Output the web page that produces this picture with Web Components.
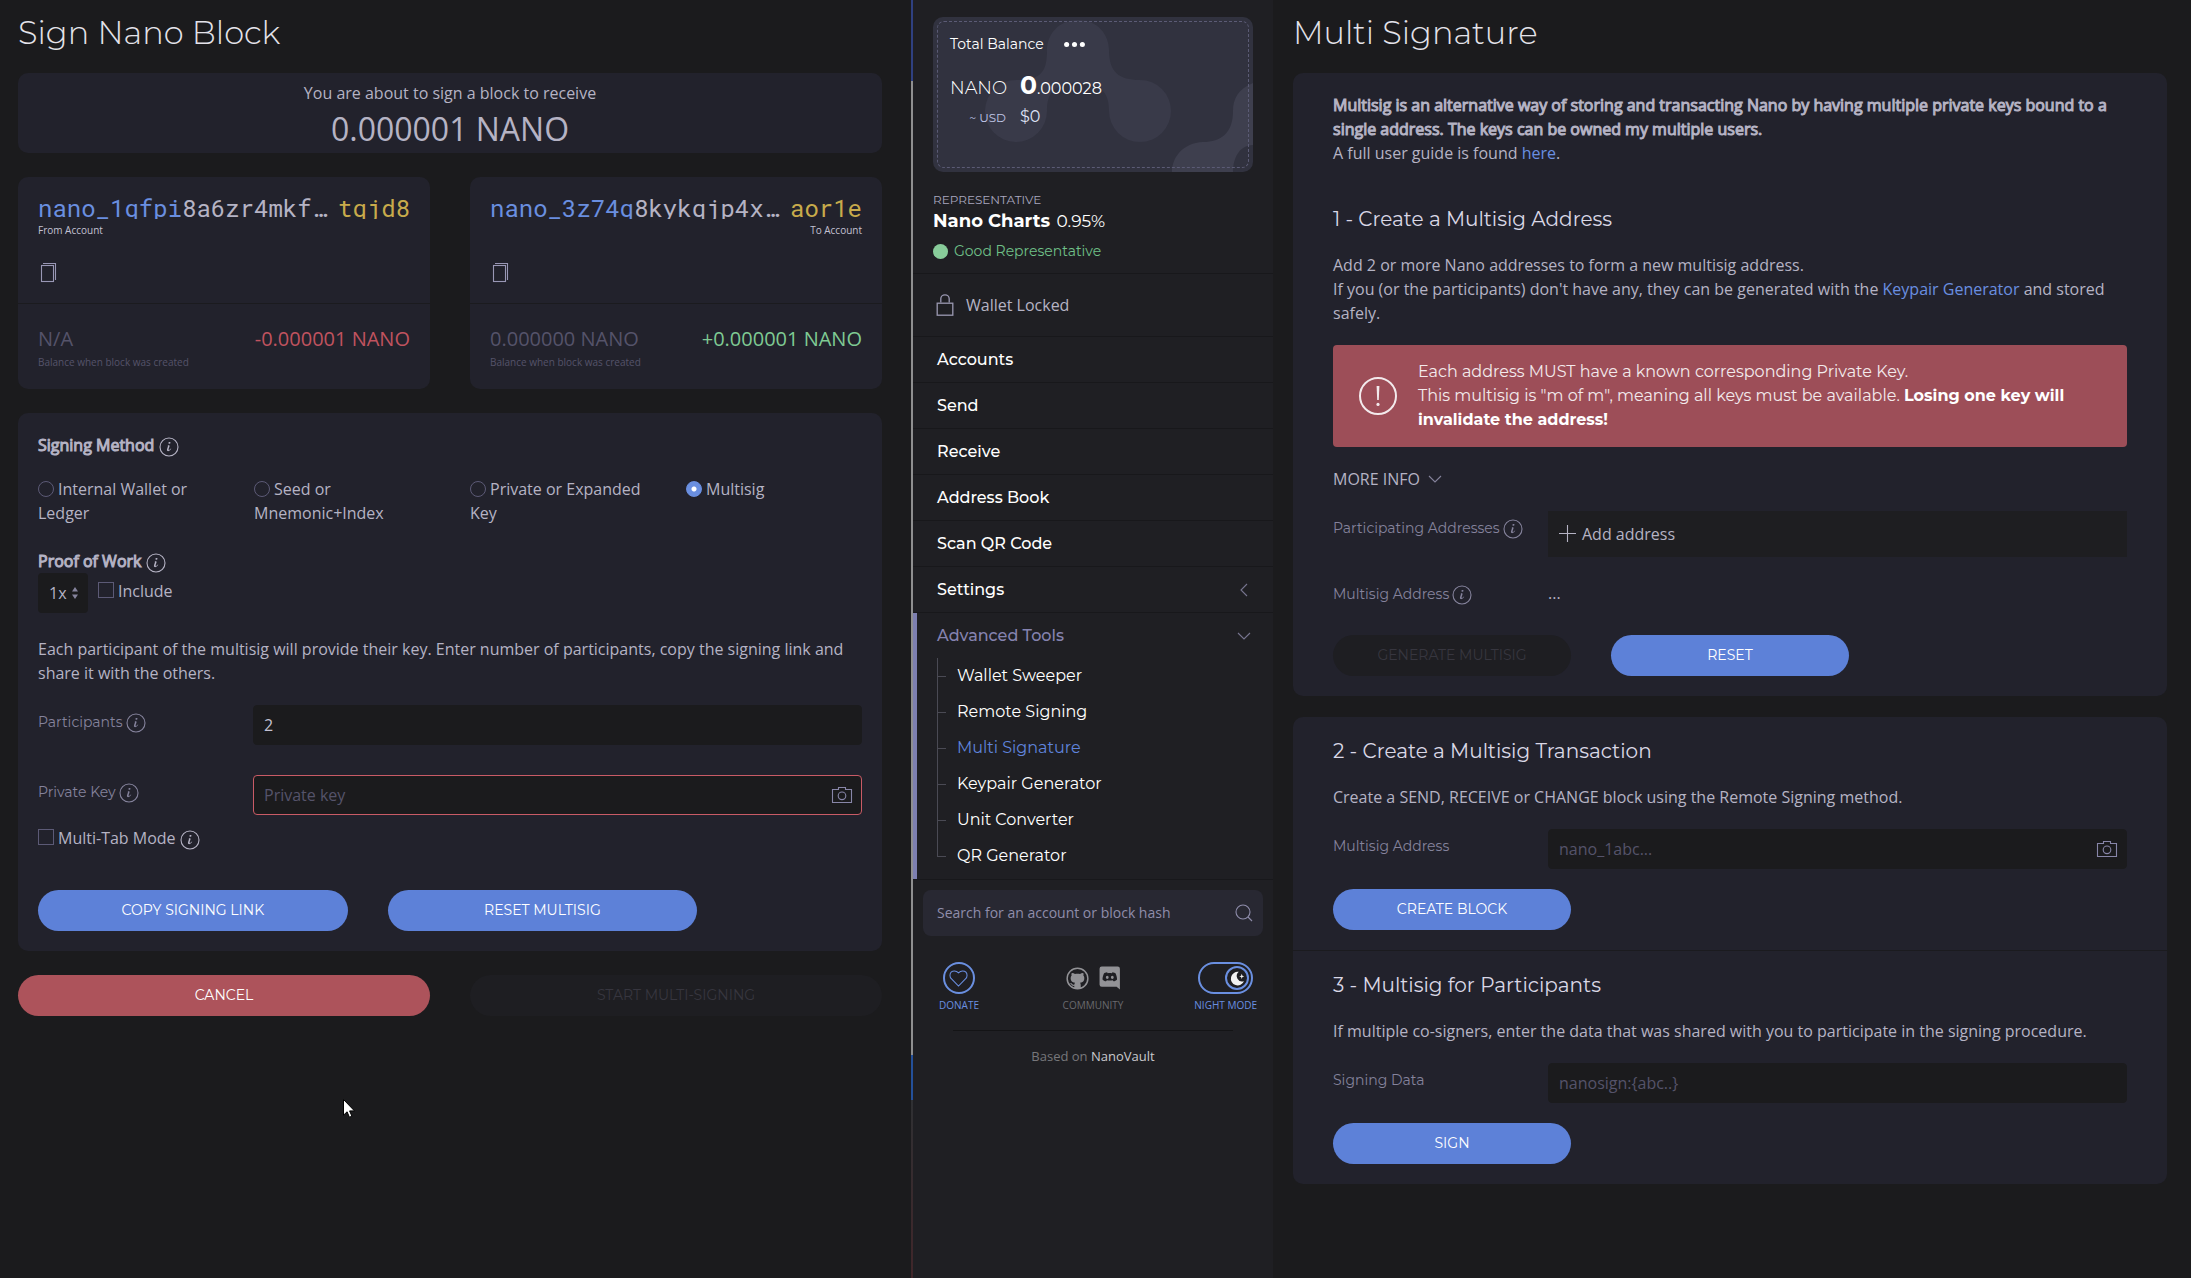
<!DOCTYPE html>
<html lang="en">
<head>
<meta charset="utf-8">
<title>Nano wallet</title>
<style>
  html { height: 100%; }
  body {
    margin: 0;
    min-height: 100%;
    background: #1b1b1d;
    color: #b5b3c4;
    font: 16px/24px "Open Sans", sans-serif;
    --display: Montserrat, Inter, sans-serif;
    --mono: "Roboto Mono", "DejaVu Sans Mono", monospace;
    --card: #22222c;
    --field: #1b1b1d;
    --muted: #85839c;
    --faint: #55536a;
    --blue: #5d81d8;
    --red: #ad535b;
    --green: #7fca93;
  }
</style>
</head>
<body>
<wallet-app></wallet-app>
<script>
const define = (name, html) => {
  const tpl = document.createElement('template');
  customElements.define(name, class extends HTMLElement {
    constructor() {
      super();
      this.attachShadow({ mode: 'open' });
    }
    connectedCallback() {
      if (this.shadowRoot.childNodes.length) return;
      tpl.innerHTML = typeof html === 'function' ? html(this) : html;
      this.shadowRoot.append(tpl.content.cloneNode(true));
    }
  });
};
const attr = (el, name, fallback = '') => el.getAttribute(name) ?? fallback;

/* ---------- icons ---------- */
const ICONS = {
  info: '<circle cx="10" cy="10" r="9"/><path fill="currentColor" stroke="none" d="M12.13,11.59 C11.97,12.84 10.35,14.12 9.1,14.16 C6.17,14.2 9.89,9.46 8.74,8.37 C9.3,8.16 10.62,7.83 10.62,8.81 C10.62,9.63 10.12,10.55 9.88,11.32 C8.66,15.16 12.13,11.15 12.14,11.18 C12.16,11.21 12.16,11.35 12.13,11.59 Z M11.56,5.67 C11.56,6.67 9.36,7.15 9.36,6.03 C9.36,5 11.56,4.54 11.56,5.67 Z"/>',
  camera: '<circle cx="10" cy="10.8" r="3.8"/><path d="M.5,4.5V17.5H19.5V4.5H13.5V2.5H6.5V4.5Z"/>',
  copy: '<rect x="3.5" y="2.5" width="12" height="16"/><path d="M5,.5H17.5V17"/>',
  lock: '<rect x="3.5" y="8.5" width="13" height="10"/><path d="M6.5,8V4.88C6.5,3.01 8.07,1.5 10,1.5C11.93,1.5 13.5,3.01 13.5,4.88V8"/>',
  heart: '<path d="M10,4C10,4 8.1,2 5.74,2C3.38,2 1,3.55 1,6.73C1,8.84 2.67,10.44 2.67,10.44L10,18L17.33,10.44C17.33,10.44 19,8.84 19,6.73C19,3.55 16.62,2 14.26,2C11.9,2 10,4 10,4Z"/>',
  search: '<circle cx="9" cy="9" r="7"/><path d="M14,14L18,18"/>',
  plus: '<path d="M9.5,1V18M1,9.5H18"/>',
  down: '<path d="M4,7L10,13L16,7"/>',
  left: '<path d="M13,16L7,10L13,4"/>',
  alert: '<circle cx="10" cy="10" r="9" stroke-width="1"/><path fill="currentColor" stroke="none" d="M9.3,5H10.7L10.4,12H9.6Z"/><circle cx="10" cy="14.2" r=".8" fill="currentColor" stroke="none"/>',
  more: '<g fill="currentColor" stroke="none"><circle cx="2.5" cy="10" r="2.4"/><circle cx="10" cy="10" r="2.4"/><circle cx="17.5" cy="10" r="2.4"/></g>',
  updown: '<path fill="currentColor" stroke="none" d="M7,8.6L10,4L13,8.6ZM7,11.4L10,16L13,11.4Z"/>',
  github: '<circle cx="10" cy="10" r="9" stroke-width="1.3"/><path fill="currentColor" stroke="none" d="M5,5.2C6,5.1 7,5.6 7.8,6.1C9.2,5.8 10.8,5.8 12.2,6.1C13,5.6 14,5.1 15,5.2C15.4,6.2 15.3,6.9 15.1,7.4C16.1,8.6 16.1,10 15.7,11.2C15.2,12.8 13.8,13.4 12.2,13.7C12.7,14.3 12.8,15 12.8,15.8V18.6H7.2V16.4C5.6,16.7 4.9,16 4.4,15.1C4.1,14.6 3.7,14.2 3.3,14C4.2,13.6 4.9,14 5.4,14.8C5.9,15.4 6.5,15.5 7.3,15.2C7.4,14.6 7.5,14.1 7.9,13.7C6.2,13.4 4.8,12.8 4.3,11.2C3.9,10 3.9,8.6 4.9,7.4C4.6,6.7 4.6,6 5,5.2Z"/>',
  discord: '<path fill="currentColor" stroke="none" fill-rule="evenodd" d="M2.5,-.5H17A2,2 0 0 1 19,1.5V20.5L16,18H2.5A2,2 0 0 1 .5,16V1.5A2,2 0 0 1 2.5,-.5ZM7.4,4.8C6,4.9 5,5.5 4.5,5.9C3.7,7.6 3.2,9.4 3.2,11.4C4,12.5 5.2,13 6.4,13L7.2,12C8.9,12.5 10.7,12.5 12.4,12L13.2,13C14.4,13 15.6,12.5 16.4,11.4C16.4,9.4 15.9,7.6 15.1,5.9C14.6,5.5 13.6,4.9 12.2,4.8L11.8,5.6C10.5,5.4 9.1,5.4 7.8,5.6ZM7.5,8A1.3,1.4 0 1 1 7.5,10.8A1.3,1.4 0 0 1 7.5,8ZM12.1,8A1.3,1.4 0 1 1 12.1,10.8A1.3,1.4 0 0 1 12.1,8Z"/>',
  moon: '<path fill="currentColor" stroke="none" d="M11.5,2.2A8,8 0 1 0 17.6,13.2A6.4,6.4 0 0 1 11.5,2.2Z"/><path fill="currentColor" stroke="none" d="M15,4.5L15.8,6.7L18,7.5L15.8,8.3L15,10.5L14.2,8.3L12,7.5L14.2,6.7Z"/>'
};
define('ui-icon', el => `
  <style>
    :host { display: inline-block; width: ${attr(el, 'size', '20')}px; height: ${attr(el, 'size', '20')}px; flex: none; vertical-align: middle; }
    svg { display: block; width: 100%; height: 100%; overflow: visible; }
  </style>
  <svg viewBox="0 0 20 20" fill="none" stroke="currentColor" stroke-width="1.1" aria-hidden="true">${ICONS[attr(el, 'name')]}</svg>`);

/* ---------- basic parts ---------- */
define('ui-card', `
  <style>
    :host { display: block; background: var(--card); border-radius: 10px; }
  </style><slot></slot>`);

define('ui-title', `
  <style>
    :host { display: block; }
    h1 { margin: 0 0 18px; font: 300 32px/44px var(--display); color: #e4e3ea; }
  </style><h1><slot></slot></h1>`);

define('ui-button', el => `
  <style>
    :host { display: block; }
    button {
      display: block; width: 100%; height: 41px; padding: 0 20px 2px; border: 0; border-radius: 21px;
      background: var(--blue); color: #fff; font: 400 14px/24px var(--display); text-transform: uppercase;
    }
    button.danger { background: var(--red); }
    button:disabled { background: #1e1e22; color: #37363f; }
  </style>
  <button type="button" class="${attr(el, 'tone')}" ${el.hasAttribute('disabled') ? 'disabled' : ''}><slot></slot></button>`);

define('ui-field', el => `
  <style>
    :host { display: grid; grid-template-columns: 215px 1fr; }
    .label { display: flex; gap: 3px; height: 24px; margin-top: 5px; font: 400 14px/24px var(--display); color: var(--muted); }
    .label ui-icon { margin-top: 3px; }
    .box { display: flex; align-items: center; box-sizing: border-box; height: 40px; padding-right: 9px; background: var(--field); border: 1px solid var(--field); border-radius: 4px; color: #8886a8; }
    .box.invalid { border-color: #c95b66; }
    input { flex: 1; min-width: 0; height: 100%; box-sizing: border-box; border: 0; padding: 0 10px; background: none; outline: 0; color: #c3c1d2; font: 16px/24px "Open Sans", sans-serif; }
    input::placeholder { color: var(--faint); opacity: 1; }
  </style>
  <div class="label"><label for="f">${attr(el, 'label')}</label>${el.hasAttribute('info') ? '<ui-icon name="info"></ui-icon>' : ''}</div>
  <div class="box ${el.hasAttribute('invalid') ? 'invalid' : ''}">
    <input id="f" type="text" value="${attr(el, 'value')}" placeholder="${attr(el, 'placeholder')}">
    ${el.hasAttribute('camera') ? '<ui-icon name="camera"></ui-icon>' : ''}
  </div>`);

define('ui-check', el => `
  <style>
    :host { display: flex; align-items: flex-start; gap: 4px; height: 24px; }
    label { display: flex; gap: 4px; }
    input { appearance: none; box-sizing: border-box; width: 16px; height: 16px; margin: 3px 0 0; border: 1px solid #5c5a76; }
    ui-icon { margin-top: 4px; }
  </style>
  <label><input type="checkbox"><span><slot></slot></span></label>${el.hasAttribute('info') ? '<ui-icon name="info"></ui-icon>' : ''}`);

/* ---------- left panel ---------- */
define('account-card', el => `
  <style>
    .top { height: 127px; box-sizing: border-box; padding: 17px 20px 0; border-bottom: 1px solid #1b1b1f; }
    .address { display: flex; height: 25px; overflow: hidden; font: 24px/28px var(--mono); white-space: nowrap; }
    .address b { font-weight: 400; color: #6a8fe0; }
    .address .body { flex: 1; min-width: 0; overflow: hidden; text-overflow: ellipsis; }
    .address i { font-style: normal; color: #c8ab4b; margin-left: 9px; }
    .role { font-size: 10px; line-height: 16px; color: #c3c1d2; margin-top: 3px; }
    .role.to { text-align: right; }
    .copy { display: block; margin: 25px 0 0; padding: 0; border: 0; background: none; color: #9997b5; }
    .copy ui-icon { display: block; }
    .bottom { padding: 22px 20px 19px; display: flex; justify-content: space-between; height: 85px; box-sizing: border-box; }
    .bal { font-size: 20px; line-height: 26px; color: var(--faint); }
    .note { font-size: 10px; line-height: 16px; color: var(--faint); margin-top: 2px; }
    .delta { font-size: 20px; line-height: 26px; color: ${attr(el, 'tone') === 'in' ? 'var(--green)' : '#c0535f'}; }
  </style>
  <ui-card>
    <div class="top">
      <div class="address"><span class="body"><b>${attr(el, 'head')}</b>${attr(el, 'body')}</span><i>${attr(el, 'tail')}</i></div>
      <div class="role ${attr(el, 'tone') === 'in' ? 'to' : ''}">${attr(el, 'role-name')}</div>
      <button class="copy" type="button" aria-label="Copy"><ui-icon name="copy"></ui-icon></button>
    </div>
    <div class="bottom">
      <div><div class="bal">${attr(el, 'balance')}</div><div class="note">Balance when block was created</div></div>
      <div class="delta">${attr(el, 'delta')}</div>
    </div>
  </ui-card>`);

define('sign-panel', `
  <style>
    :host { display: block; padding: 11px 29px 40px 18px; }
    .intro { text-align: center; height: 80px; box-sizing: border-box; padding-top: 8px; }
    .intro .big { font-size: 32px; line-height: 48px; }
    .pair { display: grid; grid-template-columns: 1fr 1fr; gap: 40px; margin: 24px 0; }
    .method { padding: 20px; }
    .head { display: flex; gap: 5px; line-height: 24px; -webkit-text-stroke: 1px; }
    .head ui-icon { margin-top: 4px; }
    .radios { display: grid; grid-template-columns: repeat(4, 1fr); gap: 40px; margin: 20px 0 24px; }
    .radios input { appearance: none; box-sizing: border-box; width: 16px; height: 16px; border: 1px solid #5c5a76; border-radius: 50%; margin: 0 4px 0 0; vertical-align: middle; position: relative; top: -2px; }
    .radios input:checked { border-color: #6a8fe0; background: radial-gradient(circle, #fff 0 2px, #6a8fe0 3px); }
    .pow { display: flex; gap: 10px; }
    .pow .sel { display: flex; align-items: center; position: relative; width: 50px; height: 40px; }
    select { appearance: none; width: 100%; height: 100%; border: 0; border-radius: 4px; padding: 0 0 0 11px; background: var(--field); color: #b5b3c4; font: 16px/24px "Open Sans", sans-serif; }
    .sel ui-icon { position: absolute; right: 3px; color: var(--muted); pointer-events: none; }
    .pow ui-check { margin-top: 6px; }
    p { margin: 24px 0 20px; }
    .fields { display: grid; gap: 30px; margin-bottom: 11px; }
    .actions { display: grid; grid-template-columns: 1fr 1fr; gap: 40px; width: 80%; margin-top: 40px; }
    .cursor { position: absolute; left: 343px; top: 1099px; }
  </style>
  <ui-title>Sign Nano Block</ui-title>
  <ui-card class="intro"><div>You are about to sign a block to receive</div><div class="big">0.000001 NANO</div></ui-card>
  <div class="pair">
    <account-card head="nano_1qfpi" body="8a6zr4mkf…" tail="tqjd8" role-name="From Account" balance="N/A" delta="-0.000001 NANO" tone="out"></account-card>
    <account-card head="nano_3z74q" body="8kykqjp4x…" tail="aor1e" role-name="To Account" balance="0.000000 NANO" delta="+0.000001 NANO" tone="in"></account-card>
  </div>
  <ui-card class="method">
    <div class="head">Signing Method <ui-icon name="info"></ui-icon></div>
    <div class="radios">
      <label><input type="radio" name="m">Internal Wallet or Ledger</label>
      <label><input type="radio" name="m">Seed or Mnemonic+Index</label>
      <label><input type="radio" name="m">Private or Expanded Key</label>
      <label><input type="radio" name="m" checked>Multisig</label>
    </div>
    <div class="head">Proof of Work <ui-icon name="info"></ui-icon></div>
    <div class="pow">
      <div class="sel"><select aria-label="Work multiplier"><option>1x</option></select><ui-icon name="updown"></ui-icon></div>
      <ui-check>Include</ui-check>
    </div>
    <p>Each participant of the multisig will provide their key. Enter number of participants, copy the signing link and share it with the others.</p>
    <div class="fields">
      <ui-field label="Participants" info value="2"></ui-field>
      <ui-field label="Private Key" info invalid camera placeholder="Private key"></ui-field>
    </div>
    <ui-check info>Multi-Tab Mode</ui-check>
    <div class="actions"><ui-button>Copy signing link</ui-button><ui-button>Reset multisig</ui-button></div>
  </ui-card>
  <div class="pair"><ui-button tone="danger">Cancel</ui-button><ui-button disabled>Start multi-signing</ui-button></div>
  <svg class="cursor" width="12" height="19" viewBox="0 0 12 19" aria-hidden="true"><path d="M.5,.5V16.2L4.1,12.8L6.4,18.2L8.9,17.2L6.6,11.9H11.5Z" fill="#fff" stroke="#000"/></svg>`);

/* ---------- sidebar ---------- */
define('balance-card', `
  <style>
    :host { display: block; position: relative; height: 155px; border-radius: 10px; overflow: hidden; background: #31323f; font-family: var(--display); color: #fff; }
    .bg { position: absolute; inset: 0; width: 100%; height: 100%; }
    .in { position: relative; margin: 4px; height: 147px; box-sizing: border-box; border: 1px dashed #5b5b75; border-radius: 7px; padding: 10px 12px; }
    .row { display: flex; align-items: baseline; }
    .total { font-size: 14px; line-height: 24px; gap: 20px; align-items: center; }
    .k { width: 56px; margin-right: 14px; text-align: right; }
    .nano { margin-top: 13px; line-height: 32px; font-size: 18px; font-weight: 300; }
    .nano b { font-size: 25px; font-weight: 700; }
    .nano .v { font-size: 16px; font-weight: 400; }
    .usd { line-height: 24px; font-size: 16px; color: #dfe3f5; }
    .usd .k { font-size: 12px; color: #c0c8e8; }
  </style>
  <svg class="bg" viewBox="0 0 320 155" preserveAspectRatio="none" aria-hidden="true">
    <path fill="#393a49" d="M145,3C165,3 176,18 176,33C176,55 186,63 207,63A31,31 0 1 1 176,94C176,80 172,66 145,66C118,66 114,80 114,94A31,31 0 1 1 84,63C108,63 114,55 114,33C114,18 125,3 145,3Z"/>
    <path fill="#3e3f4e" d="M320,66C305,72 300,82 300,94C300,116 288,125 270,125C250,126 239,140 239,155H300C300,142 306,128 320,128Z"/>
  </svg>
  <div class="in">
    <div class="row total">Total Balance <ui-icon name="more" size="21"></ui-icon></div>
    <div class="row nano"><span class="k">NANO</span><span class="v"><b>0</b>.000028</span></div>
    <div class="row usd"><span class="k">~ USD</span><span>$0</span></div>
  </div>`);

define('side-link', el => `
  <style>
    :host { display: block; border-top: 1px solid #18181b; }
    :host([open]) { border-top: 0; }
    a { display: flex; align-items: center; justify-content: space-between; height: 45px; padding: 0 19px 0 24px; text-decoration: none; color: ${el.hasAttribute('open') ? '#8583b0' : '#fff'}; font: 500 16px/24px var(--display); }
    ui-icon { color: #77758f; }
  </style>
  <a href="#"><slot></slot>${attr(el, 'icon') ? `<ui-icon name="${attr(el, 'icon')}"></ui-icon>` : ''}</a>`);

define('side-tree', `
  <style>
    :host { display: block; padding: 0 24px 5px; }
    ul { list-style: none; margin: 0; padding: 0; }
    li { display: flex; height: 36px; align-items: center; position: relative; padding-left: 20px; }
    li::before { content: ""; position: absolute; left: 0; top: 0; height: 100%; border-left: 1px solid #4a4a54; }
    li::after { content: ""; position: absolute; left: 0; top: 18px; width: 9px; border-top: 1px solid #4a4a54; }
    li:last-child::before { height: 18px; }
    a { color: #fff; text-decoration: none; font: 400 16px/24px var(--display); }
    a.on { color: #5f84dc; }
  </style>
  <ul>
    <li><a href="#">Wallet Sweeper</a></li><li><a href="#">Remote Signing</a></li>
    <li><a href="#" class="on">Multi Signature</a></li><li><a href="#">Keypair Generator</a></li>
    <li><a href="#">Unit Converter</a></li><li><a href="#">QR Generator</a></li>
  </ul>`);

define('side-footer', `
  <style>
    :host { display: block; border-top: 1px solid #18181b; padding: 10px 10px 0; }
    .search { display: flex; align-items: center; height: 46px; border-radius: 8px; background: #282832; padding: 0 9px 0 14px; color: #8f8dab; }
    input { flex: 1; min-width: 0; border: 0; padding: 0; background: none; font: 14px/24px "Open Sans", sans-serif; outline: 0; }
    input::placeholder { color: #8f8dab; opacity: 1; }
    .icons { display: grid; grid-template-columns: 1fr auto 1fr; margin: 26px 6px 0; font-size: 10px; line-height: 14px; text-align: center; color: #6a6a6e; }
    .icons > * { display: flex; flex-direction: column; align-items: center; gap: 4px; color: inherit; text-decoration: none; font: inherit; border: 0; padding: 0; background: none; }
    .icons > :first-child { justify-self: start; padding-left: 10px; }
    .icons > :last-child { justify-self: end; }
    .pic { display: flex; align-items: center; gap: 10px; height: 32px; color: #929296; }
    .icons > .blue { color: #6a8fe0; }
    .ring { box-sizing: border-box; width: 32px; height: 32px; border: 2px solid #6a8fe0; border-radius: 50%; display: flex; align-items: center; justify-content: center; }
    .toggle { box-sizing: border-box; width: 55px; height: 32px; border: 2px solid #6a8fe0; border-radius: 16px; display: flex; align-items: center; justify-content: flex-end; padding-right: 2px; }
    .knob { box-sizing: border-box; width: 24px; height: 24px; border: 2px solid #6a8fe0; border-radius: 50%; display: flex; align-items: center; justify-content: center; color: #f2f2f2; }
    .based { margin: 18px 30px 0; border-top: 1px solid #141416; padding-top: 13px; text-align: center; font-size: 13px; line-height: 24px; color: #77777b; }
    .based a { color: #c9c9cd; text-decoration: none; }
  </style>
  <div class="search"><input type="search" aria-label="Search" placeholder="Search for an account or block hash"><ui-icon name="search"></ui-icon></div>
  <div class="icons">
    <a href="#" class="blue"><span class="ring"><ui-icon name="heart" size="19"></ui-icon></span><span>DONATE</span></a>
    <div><span class="pic"><ui-icon name="github" size="23"></ui-icon><ui-icon name="discord" size="22"></ui-icon></span><span>COMMUNITY</span></div>
    <button type="button" class="blue"><span class="toggle"><span class="knob"><ui-icon name="moon" size="17"></ui-icon></span></span><span>NIGHT MODE</span></button>
  </div>
  <div class="based">Based on <a href="#">NanoVault</a></div>`);

define('wallet-sidebar', `
  <style>
    :host { display: grid; grid-template-columns: 2px 1fr; background: #1f1f23; }
    .edge { background: linear-gradient(#2f4080 0 81px, #8f8f90 81px 1055px, #24509a 1055px 1100px, #2f3033 1100px, #40262a 1278px); }
    .main { padding-top: 17px; }
    balance-card { margin: 0 20px; }
    .rep { padding: 18px 20px 10px; font-family: var(--display); }
    .rep .cap { font-size: 12px; line-height: 19px; color: #a9a7bf; }
    .rep .name { font-size: 17px; line-height: 24px; color: #fff; }
    .rep .name b { font-size: 18px; font-weight: 700; margin-right: 2px; }
    .rep .good { display: flex; align-items: center; gap: 6px; margin-top: 6px; font-size: 14px; line-height: 24px; color: #6fc088; }
    .rep .good i { width: 15px; height: 15px; border-radius: 50%; background: #88cc9a; }
    .lock { display: flex; align-items: center; gap: 9px; height: 62px; padding: 0 20px; border-top: 1px solid #18181b; color: #b5b3c4; }
    .lock ui-icon { color: #9997b0; }
    .open { border-left: 4px solid #7d7fb0; }
    .open side-link, .open side-tree { margin-left: -4px; }
    .div { border-top: 1px solid #18181b; }
  </style>
  <div class="edge"></div>
  <div class="main">
    <balance-card></balance-card>
    <div class="rep">
      <div class="cap">REPRESENTATIVE</div>
      <div class="name"><b>Nano Charts</b> 0.95%</div>
      <div class="good"><i></i>Good Representative</div>
    </div>
    <div class="lock"><ui-icon name="lock" size="24"></ui-icon>Wallet Locked</div>
    <nav>
      <side-link>Accounts</side-link><side-link>Send</side-link><side-link>Receive</side-link>
      <side-link>Address Book</side-link><side-link>Scan QR Code</side-link><side-link icon="left">Settings</side-link>
      <div class="div"></div>
      <div class="open"><side-link open icon="down">Advanced Tools</side-link><side-tree></side-tree></div>
    </nav>
    <side-footer></side-footer>
  </div>`);

/* ---------- right panel ---------- */
define('step-section', el => `
  <style>
    :host { display: block; }
    h3 { margin: 0; font: 400 20px/28px var(--display); color: #dad8e6; }
    p { margin: 20px 0; }
  </style>
  <h3>${attr(el, 'heading')}</h3><p><slot name="text"></slot></p><slot></slot>`);

define('warning-box', `
  <style>
    :host { display: flex; align-items: center; gap: 20px; padding: 15px 25px; background: #9d4e58; border-radius: 4px; color: #f3eaec; font: 400 16px/24px var(--display); }
    ::slotted(b) { font-weight: 700; color: #fff; }
  </style>
  <ui-icon name="alert" size="40"></ui-icon><div><slot></slot></div>`);

define('multisig-panel', `
  <style>
    :host { display: block; padding: 11px 24px 40px 20px; }
    ui-card { margin-bottom: 21px; }
    .pad { padding: 20px 40px; }
    .pad.sep { border-top: 1px solid #1b1b1f; }
    .intro b { font-weight: 400; -webkit-text-stroke: 1px; }
    a { color: #6a8fe0; text-decoration: none; }
    .intro { margin: 0 0 40px; }
    .more { display: flex; align-items: center; gap: 5px; margin: 20px 0; padding: 0; border: 0; background: none; color: #b5b3c4; font: 16px/24px "Open Sans", sans-serif; }
    .more ui-icon { color: #85839c; }
    .row { display: grid; grid-template-columns: 215px 1fr; }
    .label { display: flex; gap: 3px; margin-top: 5px; font: 400 14px/24px var(--display); color: var(--muted); }
    .label ui-icon { margin-top: 3px; }
    .add { display: flex; align-items: center; gap: 4px; height: 46px; padding: 0 10px; border: 0; background: #1e1e21; color: #b5b3c4; font: 16px/24px "Open Sans", sans-serif; }
    .out { display: block; margin-top: 4px; }
    .buttons { display: grid; grid-template-columns: repeat(3, 1fr); gap: 40px; margin-top: 20px; }
    .gap { margin-top: 20px; margin-bottom: 29px; }
  </style>
  <ui-title>Multi Signature</ui-title>
  <ui-card><div class="pad">
    <p class="intro"><b>Multisig is an alternative way of storing and transacting Nano by having multiple private keys bound to a single address. The keys can be owned my multiple users.</b><br>A full user guide is found <a href="#">here</a>.</p>
    <step-section heading="1 - Create a Multisig Address">
      <span slot="text">Add 2 or more Nano addresses to form a new multisig address.<br>If you (or the participants) don't have any, they can be generated with the <a href="#">Keypair Generator</a> and stored safely.</span>
      <warning-box>Each address MUST have a known corresponding Private Key.<br>This multisig is "m of m", meaning all keys must be available. <b>Losing one key will invalidate the address!</b></warning-box>
      <button class="more" type="button">MORE INFO <ui-icon name="down"></ui-icon></button>
      <div class="row"><div class="label">Participating Addresses<ui-icon name="info"></ui-icon></div><button class="add" type="button"><ui-icon name="plus"></ui-icon>Add address</button></div>
      <div class="row gap"><div class="label">Multisig Address<ui-icon name="info"></ui-icon></div><output class="out">...</output></div>
      <div class="buttons"><ui-button disabled>Generate multisig</ui-button><ui-button>Reset</ui-button></div>
    </step-section>
  </div></ui-card>
  <ui-card>
    <div class="pad">
      <step-section heading="2 - Create a Multisig Transaction">
        <span slot="text">Create a SEND, RECEIVE or CHANGE block using the Remote Signing method.</span>
        <ui-field label="Multisig Address" placeholder="nano_1abc..." camera></ui-field>
        <div class="buttons"><ui-button>Create block</ui-button></div>
      </step-section>
    </div>
    <div class="pad sep">
      <step-section heading="3 - Multisig for Participants">
        <span slot="text">If multiple co-signers, enter the data that was shared with you to participate in the signing procedure.</span>
        <ui-field label="Signing Data" placeholder="nanosign:{abc..}"></ui-field>
        <div class="buttons"><ui-button>Sign</ui-button></div>
      </step-section>
    </div>
  </ui-card>`);

define('wallet-app', `
  <style>
    :host { display: grid; grid-template-columns: 911fr 362px 918fr; min-height: 100vh; }
  </style>
  <sign-panel></sign-panel><wallet-sidebar></wallet-sidebar><multisig-panel></multisig-panel>`);
</script>
</body>
</html>
